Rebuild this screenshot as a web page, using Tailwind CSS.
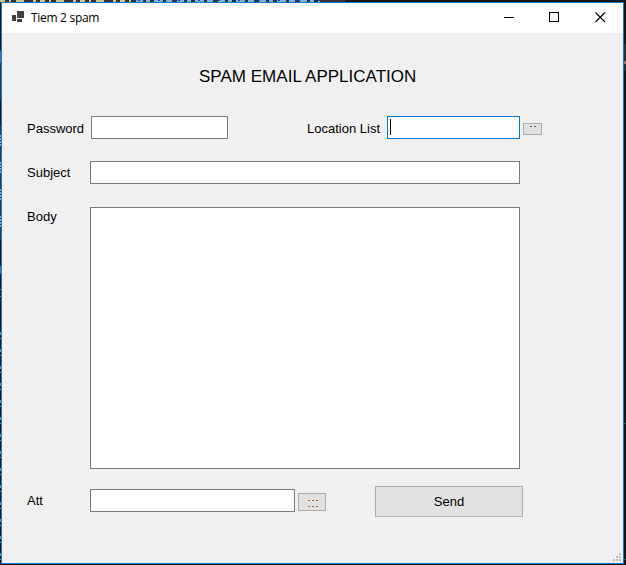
<!DOCTYPE html>
<html lang="en">
<head>
<meta charset="utf-8">
<title>Tiem 2 spam</title>
<script src="https://cdn.jsdelivr.net/npm/@tailwindcss/browser@4"></script>
</head>
<body class="relative h-[565px] w-[626px] overflow-hidden bg-[#171717] pt-0.5 pl-px font-['Liberation_Sans',Arial,sans-serif] text-[13px] text-black">
<!-- editor behind the window -->
<svg class="absolute inset-0" width="626" height="565" shape-rendering="crispEdges" fill="none">
  <path d="M0 1H345" stroke="#30333d" stroke-width="2"/>
  <path d="M0 1H136" stroke="#c5c491" stroke-width="2" stroke-dasharray="5 4 2 5 8 9 3 4"/>
  <path d="M136 1H320" stroke="#74b6dc" stroke-width="2" stroke-dasharray="7 3 4 4 9 3 6 5"/>
  <path d="M138 .5H320" stroke="#2342c8" stroke-dasharray="2 18"/>
  <path d="M.5 50V100M.5 125V240" stroke="#34383f"/>
  <path d="M.5 51V63M.5 266V274" stroke="#2f76bb"/>
  <path d="M.5 135V146M.5 162V173M.5 189V200M.5 216V227" stroke="#6db5e5" stroke-dasharray="2 1"/>
  <path d="M.5 289V298" stroke="#777" stroke-dasharray="1 6"/>
  <path d="M.5 332V560" stroke="#4b9ac8" stroke-dasharray="2 15"/>
  <path d="M.5 334V560" stroke="#9b9157" stroke-dasharray="1 16"/>
  <path d="M.5 338V560" stroke="#8d9294" stroke-dasharray="1 16"/>
  <path d="M625 44V71" stroke="#292d32" stroke-width="2"/>
  <path d="M625 61V64" stroke="#a66f61" stroke-width="2"/>
  <path d="M624 423.5H626M624 559.5H626" stroke="#23625c"/>
</svg>
<main class="relative flex h-[562px] w-[623px] flex-col border border-[#1979ca] bg-[#f0f0f0]">
  <header class="flex h-[30px] shrink-0 items-center bg-white pl-2.5">
    <svg class="mb-0.5" width="13" height="12" shape-rendering="crispEdges" fill="#424242"><path d="M5 0h7v7H5zM0 4h4v6H0zM5 8h5v3H5z"/></svg>
    <span class="ml-1.5 w-[72px] whitespace-nowrap font-['Open_Sans','Noto_Sans',sans-serif] text-[12px] leading-[30px] tracking-[-0.3px]">Tiem 2 spam</span>
    <div class="mb-px ml-auto flex pr-[17px]">
      <svg class="mr-[34px]" width="11" height="11" shape-rendering="crispEdges"><path d="M0 5.5h10" stroke="#000"/></svg>
      <svg class="mr-[35px]" width="11" height="11" shape-rendering="crispEdges" fill="none"><path d="M.5 .5h9v9h-9z" stroke="#000"/></svg>
      <svg width="11" height="11" fill="none"><path d="M.5 .5l9.5 9.5M10 .5l-9.5 9.5" stroke="#000" stroke-width="1.1"/></svg>
    </div>
  </header>
  <h1 class="mt-[34px] ml-[197px] h-5 w-[220px] shrink-0 whitespace-nowrap text-[17px] leading-5 tracking-[0.02px]">SPAM EMAIL APPLICATION</h1>
  <div class="mt-[29px] flex h-[23px] shrink-0 pl-[25px]">
    <label class="w-16 leading-[26px]">Password</label>
    <div class="w-[137px] border border-[#7a7a7a] bg-white"></div>
    <label class="ml-[79px] w-20 whitespace-nowrap leading-[26px]">Location List</label>
    <div class="w-[133px] border border-[#0078d7] bg-white pt-0.5 pl-0.5"><div class="h-4 w-px bg-black"></div></div>
    <button class="mt-[7px] ml-[3px] flex h-3 w-[19px] justify-center border border-[#adadad] bg-[#e1e1e1] pt-0.5" aria-label="Browse locations">
      <svg width="6" height="2" shape-rendering="crispEdges"><path d="M0 .5h2M4 .5h2" stroke="#4d6888"/></svg>
    </button>
  </div>
  <div class="mt-[22px] flex h-[23px] shrink-0 pl-[25px]">
    <label class="w-[63px] leading-6">Subject</label>
    <div class="w-[430px] border border-[#7a7a7a] bg-white"></div>
  </div>
  <div class="mt-[23px] flex h-[262px] shrink-0 pl-[25px]">
    <label class="w-[63px] leading-5">Body</label>
    <div class="w-[430px] border border-[#7a7a7a] bg-white"></div>
  </div>
  <div class="mt-[17px] flex h-[31px] shrink-0 items-start pl-[25px]">
    <label class="w-[63px] pt-1 leading-[22px]">Att</label>
    <div class="mt-[3px] h-[23px] w-[205px] border border-[#7a7a7a] bg-white"></div>
    <button class="mt-[7px] ml-[3px] flex h-[18px] w-7 justify-center border border-[#adadad] bg-[#e1e1e1] pt-1.5 pl-px" aria-label="Browse attachments">
      <svg width="10" height="8" shape-rendering="crispEdges"><path d="M0 .5h2M4 .5h2M8 .5h2M0 6.5h2M4 6.5h2M8 6.5h2" stroke="#97633b"/></svg>
    </button>
    <button class="ml-[49px] h-[31px] w-[148px] border border-[#adadad] bg-[#e1e1e1] leading-[29px]">Send</button>
  </div>
  <svg class="mt-auto mr-0.5 mb-[2px] ml-auto" width="8" height="8" shape-rendering="crispEdges" fill="#bfbfbf"><path d="M6 0h2v2H6zM3 3h2v2H3zM6 3h2v2H6zM0 6h2v2H0zM3 6h2v2H3zM6 6h2v2H6z"/></svg>
</main>
</body>
</html>
